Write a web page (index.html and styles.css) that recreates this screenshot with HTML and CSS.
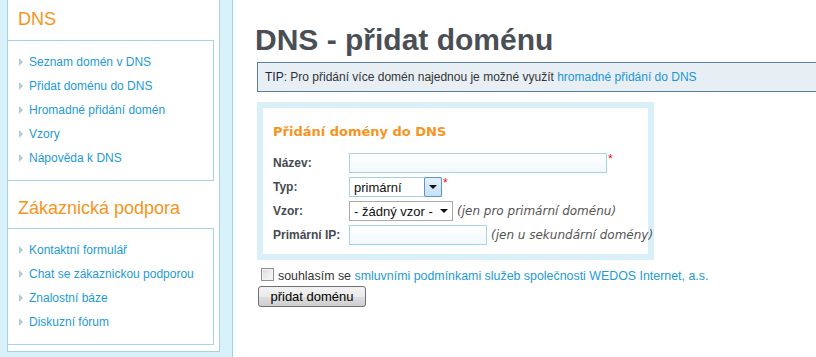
FILE: index.html
```html
<!DOCTYPE html>
<html lang="cs">
<head>
<meta charset="utf-8">
<title>DNS - přidat doménu</title>
<link rel="stylesheet" href="styles.css">
</head>
<body>
<div class="page">
  <aside class="sidebar">
    <div class="panel">
      <h2 class="side-title">DNS</h2>
      <ul class="side-menu">
        <li><a href="#">Seznam domén v DNS</a></li>
        <li><a href="#">Přidat doménu do DNS</a></li>
        <li><a href="#">Hromadné přidání domén</a></li>
        <li><a href="#">Vzory</a></li>
        <li><a href="#">Nápověda k DNS</a></li>
      </ul>
      <h2 class="side-title second">Zákaznická podpora</h2>
      <ul class="side-menu">
        <li><a href="#">Kontaktní formulář</a></li>
        <li><a href="#">Chat se zákaznickou podporou</a></li>
        <li><a href="#">Znalostní báze</a></li>
        <li><a href="#">Diskuzní fórum</a></li>
      </ul>
    </div>
  </aside>
  <main class="main">
    <h1 class="title">DNS - přidat doménu</h1>
    <div class="tip"><strong>TIP</strong>: Pro přidání více domén najednou je možné využít <a href="#">hromadné přidání do DNS</a></div>
    <form class="form-box">
      <h3 class="form-title">Přidání domény do DNS</h3>
      <div class="form-grid">
        <label class="label">Název:</label>
        <div class="field"><span class="input input-name"></span><span class="req">*</span></div>
        <label class="label">Typ:</label>
        <div class="field">
          <span class="select select-type"><span class="select-text">primární</span><span class="select-btn"><span class="arrow"></span></span></span><span class="req">*</span>
        </div>
        <label class="label">Vzor:</label>
        <div class="field">
          <span class="select select-tpl"><span class="select-text">- žádný vzor -</span><span class="plain-arrow"><span class="arrow"></span></span></span><span class="note">(jen pro primární doménu)</span>
        </div>
        <label class="label">Primární IP:</label>
        <div class="field"><span class="input input-ip"></span><span class="note">(jen u sekundární domény)</span></div>
      </div>
    </form>
    <div class="agree"><span class="checkbox"></span><span>souhlasím se&nbsp;<a href="#">smluvními podmínkami služeb společnosti WEDOS Internet, a.s.</a></span></div>
    <button class="btn" type="button">přidat doménu</button>
  </main>
</div>
</body>
</html>
```
FILE: styles.css
```css
html, body {
  margin: 0;
  padding: 0;
  background: #fff;
  overflow: hidden;
}
body {
  font-family: "Liberation Sans", Arial, sans-serif;
  color: #333;
}
a {
  color: #1e9ad6;
  text-decoration: none;
}
.page {
  display: flex;
  width: 840px;
  min-height: 357px;
}
.sidebar {
  flex: none;
  width: 233px;
  box-sizing: border-box;
  background: #d9f1f9;
  border-right: 1px solid #a6d2e0;
  padding-left: 7px;
}
.panel {
  width: 213px;
  box-sizing: border-box;
  background: #fff;
  border: 1px solid #a6d2e0;
  border-top: 0;
  padding: 8px 0 6px 0;
}
.side-title {
  margin: 0 0 10px 0;
  padding-left: 10px;
  font-size: 18px;
  line-height: 22px;
  font-weight: normal;
  color: #f7941d;
}
.side-title.second {
  margin-top: 16px;
  margin-bottom: 9px;
}
.side-menu {
  list-style: none;
  margin: 0 0 0 -1px;
  width: 207px;
  box-sizing: border-box;
  border: 1px solid #a9d4e2;
  padding: 9px 0 10px 0;
}
.side-menu li {
  display: flex;
  align-items: center;
  height: 24px;
  padding-left: 11px;
  font-size: 12px;
}
.side-menu li::before {
  content: "";
  width: 0;
  height: 0;
  border-left: 4px solid #b3cbd4;
  border-top: 4px solid transparent;
  border-bottom: 4px solid transparent;
  margin-right: 6px;
}
.main {
  flex: 1;
  padding-left: 24px;
}
.title {
  margin: 23px 0 0 -2px;
  font-size: 30px;
  line-height: 34px;
  font-weight: bold;
  color: #4a4f55;
}
.tip {
  margin-top: 5px;
  border: 1px solid #587f9b;
  background: #e7eff5;
  padding: 7px;
  font-size: 12px;
  line-height: 14px;
  color: #333;
}
.tip strong {
  font-weight: normal;
  color: #1b2a3a;
}
.tip a {
  color: #1b95d3;
}
.form-box {
  margin: 10px 0 0 0;
  width: 397px;
  box-sizing: border-box;
  border: 6px solid #daf0f8;
  padding: 16px 10px 9px 10px;
}
.form-title {
  margin: 0 0 13px 0;
  font-family: "DejaVu Sans", Verdana, sans-serif;
  font-size: 13px;
  line-height: 16px;
  font-weight: bold;
  color: #f7941d;
}
.form-grid {
  display: grid;
  grid-template-columns: 76px auto;
  grid-auto-rows: 20px;
  row-gap: 4px;
  align-items: center;
}
.label {
  font-size: 12px;
  font-weight: bold;
  color: #454a50;
}
.field {
  display: flex;
  align-items: center;
  height: 20px;
}
.input {
  display: block;
  height: 20px;
  box-sizing: border-box;
  border: 1px solid #a8d3e0;
  background: linear-gradient(#ffffff, #f2f8fb);
}
.input-name {
  width: 258px;
}
.input-ip {
  width: 138px;
}
.req {
  align-self: flex-start;
  margin-left: 1px;
  margin-top: -1px;
  font-size: 12px;
  line-height: 14px;
  color: #ee1111;
}
.select {
  display: flex;
  align-items: center;
  height: 20px;
  box-sizing: border-box;
  background: #fff;
  font-size: 13px;
  color: #111;
}
.select-text {
  flex: 1;
  padding-left: 4px;
  white-space: nowrap;
}
.select-type {
  width: 93px;
  border: 1px solid #a9cfdd;
  border-right: 0;
}
.select-btn {
  display: flex;
  align-items: center;
  justify-content: center;
  width: 18px;
  height: 20px;
  margin-top: -1px;
  margin-bottom: -1px;
  box-sizing: border-box;
  border: 1px solid #5f95c5;
  border-radius: 2px;
  background: linear-gradient(#e4f1fb, #c5e0f5);
}
.select-tpl {
  width: 104px;
  border: 1px solid #a9a9a9;
}
.plain-arrow {
  display: flex;
  align-items: center;
  justify-content: center;
  width: 16px;
}
.arrow {
  width: 0;
  height: 0;
  border-top: 4px solid #111;
  border-left: 4px solid transparent;
  border-right: 4px solid transparent;
}
.note {
  margin-left: 4px;
  font-family: "DejaVu Sans", Verdana, sans-serif;
  font-size: 12px;
  font-style: italic;
  color: #555;
  white-space: nowrap;
}
.agree {
  display: flex;
  align-items: flex-start;
  margin-top: 6px;
  font-size: 12.4px;
  line-height: 20px;
  color: #333;
  white-space: nowrap;
}
.checkbox {
  flex: none;
  width: 13px;
  height: 13px;
  box-sizing: border-box;
  margin: 2px 4px 0 4px;
  border: 1px solid #8e8f8f;
  background: linear-gradient(135deg, #dcdcdc, #fbfbfb);
  box-shadow: inset 0 0 0 1px #f4f4f4;
}
.btn {
  display: block;
  margin: 0 0 0 1px;
  width: 108px;
  height: 21px;
  padding: 0;
  border: 1px solid #707070;
  border-radius: 3px;
  background: linear-gradient(#f2f2f2 0%, #ebebeb 50%, #dddddd 51%, #cfcfcf 100%);
  font-family: "Liberation Sans", Arial, sans-serif;
  font-size: 13px;
  color: #000;
}
```
